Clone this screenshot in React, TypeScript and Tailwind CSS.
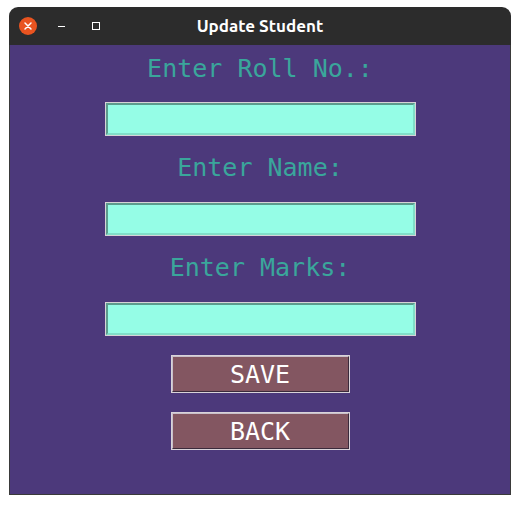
import React from "react";

function Entry() {
  return (
    <div className="w-[311px] h-[34px] border border-[#d6d3d6] bg-[#d6d3d6]">
      <div className="w-full h-full border-2 border-t-[#5c9c8d] border-l-[#5c9c8d] border-b-[#80dec8] border-r-[#80dec8] bg-[#95fde6]" />
    </div>
  );
}

function Btn({ label }: { label: string }) {
  return (
    <div className="w-[179px] h-[38px] border border-[#d9d3d9]">
      <div className="w-full h-full border border-t-[#c9bfc9] border-l-[#c9bfc9] border-b-[#3b2a3b] border-r-[#3b2a3b] bg-[#835661] flex items-center justify-center text-white text-[25px] leading-none" style={{ fontFamily: '"DejaVu Sans Mono", monospace' }}>
        {label}
      </div>
    </div>
  );
}

function Label({ text }: { text: string }) {
  return (
    <div className="h-[30px] leading-[30px] text-[25px] text-[#3aa69b] whitespace-pre" style={{ fontFamily: '"DejaVu Sans Mono", monospace' }}>
      {text}
    </div>
  );
}

export default function App() {
  return (
    <div className="w-[520px] h-[505px] bg-white pt-[7px] pl-[9px]">
      <div className="w-[502px] h-[488px] flex flex-col">
        <div className="h-[38px] bg-[#2c2c2c] rounded-t-[9px] flex items-center relative">
          <div className="absolute left-[10px] top-[10px] w-[18px] h-[18px] rounded-full bg-[#e95420] flex items-center justify-center">
            <svg width="10" height="10" viewBox="0 0 10 10">
              <path d="M2 2 L8 8 M8 2 L2 8" stroke="white" strokeWidth="1.5" strokeLinecap="round" />
            </svg>
          </div>
          <div className="absolute left-[49px] top-[19px] w-[7px] h-[1px] bg-white" />
          <div className="absolute left-[83px] top-[15px] w-[8px] h-[8px] border border-white" />
          <div className="w-full text-center text-white text-[17px] font-bold" style={{ fontFamily: 'Ubuntu, "Open Sans", "DejaVu Sans", sans-serif' }}>
            Update Student
          </div>
        </div>
        <div className="flex-1 bg-[#4c397b] border-x border-b border-[#3a3a3a] flex flex-col items-center pt-[9px]">
          <Label text="Enter Roll No.:" />
          <div className="mt-[18px]"><Entry /></div>
          <div className="mt-[17px]"><Label text="Enter Name:" /></div>
          <div className="mt-[19px]"><Entry /></div>
          <div className="mt-[17px]"><Label text="Enter Marks:" /></div>
          <div className="mt-[19px]"><Entry /></div>
          <div className="mt-[19px]"><Btn label="SAVE" /></div>
          <div className="mt-[19px]"><Btn label="BACK" /></div>
        </div>
      </div>
    </div>
  );
}
